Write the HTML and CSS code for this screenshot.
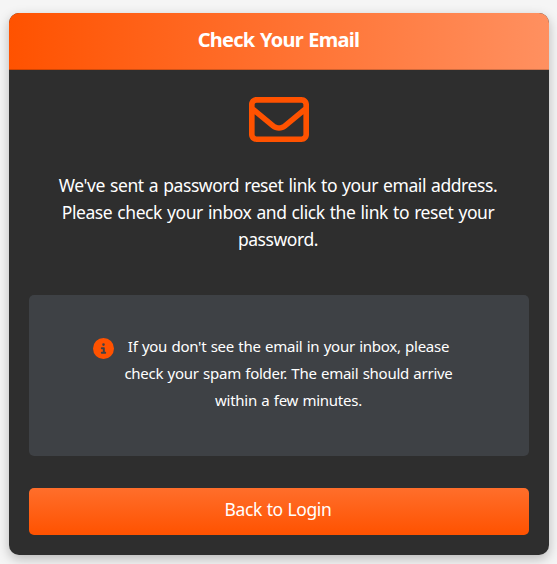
FILE: index.html
```html
<!DOCTYPE html>
<html lang="en">
<head>
<meta charset="utf-8">
<title>Check Your Email</title>
<link rel="stylesheet" href="styles.css">
</head>
<body>
<main class="card">
  <header class="card-header"><h1>Check Your Email</h1></header>
  <section class="card-body">
    <svg class="envelope" viewBox="0 64 512 384" aria-hidden="true"><path d="M64 112c-8.800 0-16 7.200-16 16v22.100L220.500 291.700c20.700 17 50.400 17 71.100 0L464 150.100V128c0-8.800-7.200-16-16-16H64zM48 212.200V384c0 8.800 7.200 16 16 16H448c8.800 0 16-7.200 16-16V212.200L322 328.800c-38.400 31.500-93.700 31.500-132 0L48 212.200zM0 128C0 92.700 28.700 64 64 64H448c35.300 0 64 28.700 64 64V384c0 35.300-28.700 64-64 64H64c-35.300 0-64-28.700-64-64V128z"/></svg>
    <p class="message">We've sent a password reset link to your email address.<br>Please check your inbox and click the link to reset your<br>password.</p>
    <div class="note">
      <svg class="info" viewBox="0 0 512 512" aria-hidden="true"><path d="M256 512A256 256 0 1 0 256 0a256 256 0 1 0 0 512zM216 336h24V272H216c-13.300 0-24-10.700-24-24s10.700-24 24-24h48c13.300 0 24 10.700 24 24v88h8c13.300 0 24 10.700 24 24s-10.700 24-24 24H216c-13.300 0-24-10.700-24-24s10.700-24 24-24zm40-208a32 32 0 1 1 0 64 32 32 0 1 1 0-64z"/></svg>
      <p class="note-text">If you don't see the email in your inbox, please<br>check your spam folder. The email should arrive<br>within a few minutes.</p>
    </div>
    <a class="button" href="#">Back to Login</a>
  </section>
</main>
</body>
</html>
```
FILE: styles.css
```css
* { box-sizing: border-box; }
body {
  margin: 0;
  padding: 13px 8px 9px 9px;
  height: 564px;
  overflow: hidden;
  background: #f5f5f5;
  color: #fff;
  font-family: "Noto Sans", sans-serif;
}
.card {
  height: 542px;
  border-radius: 10px;
  background: #2e2e2e;
  box-shadow: 0 4px 12px rgba(0, 0, 0, .25);
  overflow: hidden;
}
.card-header {
  height: 57px;
  background: linear-gradient(90deg, #ff5200, #ff9060);
  border-bottom: 1px solid rgba(0, 0, 0, .18);
  text-align: center;
}
h1 {
  margin: 0 1px 0 0;
  font-size: 20px;
  line-height: 54px;
  font-weight: 700;
  letter-spacing: -.75px;
  word-spacing: 1px;
}
.card-body {
  display: flex;
  flex-direction: column;
  padding: 27px 20px 20px;
  text-align: center;
}
.envelope {
  width: 60px;
  height: 45px;
  margin-right: 1px;
  align-self: center;
  fill: #ff5200;
}
.message {
  margin: 30px 2px 0 0;
  font-size: 17.5px;
  line-height: 27px;
  letter-spacing: -.42px;
  word-spacing: .9px;
  white-space: nowrap;
}
.note {
  display: flex;
  justify-content: center;
  gap: 10px;
  height: 161px;
  margin-top: 42px;
  padding: 38px 76px 0 64px;
  border-radius: 5px;
  background: #3e4145;
}
.info {
  flex: none;
  width: 21px;
  height: 21px;
  margin-top: 5px;
  fill: #ff5200;
}
.note-text {
  margin: 0;
  font-size: 15px;
  line-height: 27px;
  letter-spacing: -.26px;
  word-spacing: .7px;
  white-space: nowrap;
}
.button {
  height: 47px;
  margin-top: 32px;
  padding-right: 2px;
  border-radius: 5px;
  background: linear-gradient(#ff6e2b, #ff5200);
  color: #fff;
  font-size: 17.5px;
  line-height: 43px;
  letter-spacing: -.4px;
  word-spacing: .6px;
  text-decoration: none;
}
```
